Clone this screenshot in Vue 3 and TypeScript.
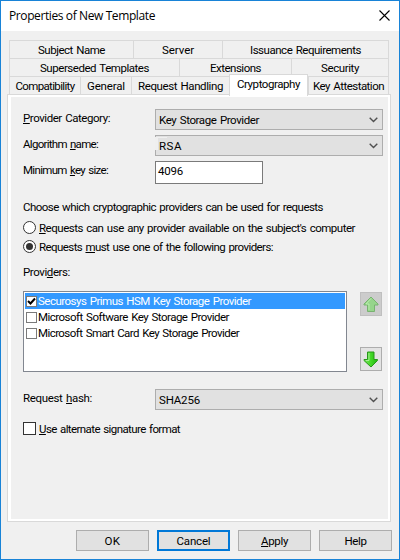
<script setup lang="ts">
import { ref, type Directive } from 'vue'

interface Tab { label: string; fit: number; size: number; active?: boolean }
interface Provider { label: string; fit: number }

// Spreads the letters of a label evenly so that it takes up the given width.
const vFit: Directive<HTMLElement, number> = {
  mounted(el, { value }) {
    const count = (el.textContent ?? '').length
    const natural = el.getBoundingClientRect().width
    el.style.letterSpacing = `${(value - natural) / count}px`
  },
}

const tabRows: Tab[][] = [
  [
    { label: 'Subject Name', fit: 67, size: 124 },
    { label: 'Server', fit: 32, size: 89 },
    { label: 'Issuance Requirements', fit: 111, size: 166 },
  ],
  [
    { label: 'Superseded Templates', fit: 109, size: 170 },
    { label: 'Extensions', fit: 51, size: 112 },
    { label: 'Security', fit: 38, size: 97 },
  ],
  [
    { label: 'Compatibility', fit: 59, size: 71 },
    { label: 'General', fit: 38, size: 51 },
    { label: 'Request Handling', fit: 85, size: 98 },
    { label: 'Cryptography', fit: 63, size: 79, active: true },
    { label: 'Key Attestation', fit: 71, size: 80 },
  ],
]

const providers: Provider[] = [
  { label: 'Securosys Primus HSM Key Storage Provider', fit: 213 },
  { label: 'Microsoft Software Key Storage Provider', fit: 191 },
  { label: 'Microsoft Smart Card Key Storage Provider', fit: 201 },
]

const checked = ref<number[]>([0])
const selected = ref(0)
const mode = ref<'any' | 'listed'>('listed')
const alternate = ref(false)

function toggle(i: number) {
  selected.value = i
  checked.value = checked.value.includes(i)
    ? checked.value.filter((n) => n !== i)
    : [...checked.value, i]
}
</script>

<template>
  <div class="dialog">
    <header class="titlebar">
      <span v-fit="146" class="title">Properties of New Template</span>
      <svg class="close" width="11" height="11" viewBox="0 0 11 11"><path d="M.5.5l10 10M10.500.5l-10 10" /></svg>
    </header>

    <nav class="tabs">
      <div v-for="(row, r) in tabRows" :key="r" class="tab-row">
        <div
          v-for="tab in row"
          :key="tab.label"
          class="tab"
          :class="{ active: tab.active }"
          :style="{ width: tab.size + 'px' }"
        ><span v-fit="tab.fit">{{ tab.label }}</span></div>
      </div>
    </nav>

    <main class="pane">
      <div class="field">
        <label><span v-fit="87"><u>P</u>rovider Category:</span></label>
        <div class="combo">
          <span v-fit="100">Key Storage Provider</span>
          <svg class="chevron" width="9" height="6" viewBox="0 0 9 6"><path d="M.7.8l3.800 3.800L8.300.8" /></svg>
        </div>
      </div>
      <div class="field">
        <label><span v-fit="75">Algorithm <u>n</u>ame:</span></label>
        <div class="combo worn">
          <span v-fit="23">RSA</span>
          <svg class="chevron" width="9" height="6" viewBox="0 0 9 6"><path d="M.7.8l3.800 3.800L8.300.8" /></svg>
        </div>
      </div>
      <div class="field">
        <label><span v-fit="85">Minimum <u>k</u>ey size:</span></label>
        <div class="edit"><span v-fit="25">4096</span></div>
      </div>

      <p class="intro"><span v-fit="300">Choose which cryptographic providers can be used for requests</span></p>
      <div class="option" @click="mode = 'any'">
        <i class="radio" :class="{ on: mode === 'any' }"></i>
        <span v-fit="316"><u>R</u>equests can use any provider available on the subject's computer</span>
      </div>
      <div class="option second" @click="mode = 'listed'">
        <i class="radio" :class="{ on: mode === 'listed' }"></i>
        <span v-fit="234">Requests <u>m</u>ust use one of the following providers:</span>
      </div>

      <p class="list-label"><span v-fit="47">Provi<u>d</u>ers:</span></p>
      <div class="list-area">
        <div class="list">
          <div
            v-for="(p, i) in providers"
            :key="p.label"
            class="item"
            :class="{ selected: selected === i }"
            @click="toggle(i)"
          >
            <i class="check">
              <svg v-if="checked.includes(i)" width="9" height="9" viewBox="0 0 9 9"><path d="M1 4l2.500 2.500L8 1.500" /></svg>
            </i>
            <span v-fit="p.fit">{{ p.label }}</span>
          </div>
        </div>
        <div class="movers">
          <div class="mover disabled">
            <svg width="16" height="17" viewBox="0 0 16 17">
              <path class="arrow faded" d="M8 1L15 8v1h-3.500v6.500h-7V9H1V8z" />
              <path class="shine" d="M8 2.500L3 8h3v6" />
            </svg>
          </div>
          <div class="mover">
            <svg width="16" height="17" viewBox="0 0 16 17">
              <defs>
                <linearGradient id="green" x1="0" y1="0" x2="1" y2="0">
                  <stop offset="0" stop-color="#7be35f" />
                  <stop offset=".5" stop-color="#43d926" />
                  <stop offset="1" stop-color="#22b512" />
                </linearGradient>
              </defs>
              <path class="arrow" d="M4.500 1h6.500v7.500h3.500v1L8 16 1 9.500v-1h3.500z" />
              <path class="shine" d="M6 2v7.500H3" />
            </svg>
          </div>
        </div>
      </div>

      <div class="field hash">
        <label><span v-fit="69">Request <u>h</u>ash:</span></label>
        <div class="combo">
          <span v-fit="41">SHA256</span>
          <svg class="chevron" width="9" height="6" viewBox="0 0 9 6"><path d="M.7.8l3.800 3.800L8.300.8" /></svg>
        </div>
      </div>
      <div class="option alt" @click="alternate = !alternate">
        <i class="box">
          <svg v-if="alternate" width="9" height="9" viewBox="0 0 9 9"><path d="M1 4l2.500 2.500L8 1.500" /></svg>
        </i>
        <span v-fit="141"><u>U</u>se alternate signature format</span>
      </div>
    </main>

    <footer class="buttons">
      <button><span v-fit="16">OK</span></button>
      <button class="default"><span v-fit="34">Cancel</span></button>
      <button><span v-fit="27"><u>A</u>pply</span></button>
      <button><span v-fit="22">Help</span></button>
    </footer>
  </div>
</template>

<style>
body { margin: 0; }
</style>

<style scoped>
.dialog, .dialog * { box-sizing: border-box; }
.dialog {
  width: 400px;
  height: 560px;
  border: 1px solid #1883d7;
  background: #f0f0f0;
  color: #000;
  font: 11.5px/16px Roboto, "Liberation Sans", sans-serif;
  word-spacing: 1px;
  display: flex;
  flex-direction: column;
  overflow: hidden;
  cursor: default;
}
span { white-space: pre; }
p { margin: 0; }
u { text-decoration: underline; text-decoration-thickness: 1px; text-underline-offset: 1px; text-decoration-skip-ink: none; }
.titlebar {
  height: 30px;
  flex: none;
  background: #fff;
  display: flex;
  align-items: center;
  justify-content: space-between;
  padding: 0 9px 0 8px;
}
.title { font: 12px/16px "Open Sans", "Noto Sans", sans-serif; word-spacing: 0; }
.close { margin-top: -2px; }
.close path { fill: none; stroke: #000; stroke-width: 1.100; }

.tabs { margin: 9px 0 0 8px; width: 380px; flex: none; }
.tab-row { display: flex; height: 18px; }
.tab {
  border: 1px solid #d9d9d9;
  border-width: 1px 0 0 1px;
  display: flex;
  justify-content: center;
  padding-top: 1px;
}
.tab:last-child { flex: 1; border-right-width: 1px; }
.tab.active {
  background: #fff;
  position: relative;
  height: 22px;
  margin-top: -2px;
  border-right-width: 1px;
}
.pane {
  margin-left: 6px;
  width: 384px;
  height: 428px;
  flex: none;
  border: 1px solid #d9d9d9;
  box-shadow: inset 0 0 0 2px #fff, inset 3px 0 0 #fff;
  padding: 14px 0 0 15px;
}
.field { display: grid; grid-template-columns: 132px 228px; height: 26px; }
label { padding-top: 1px; }
.combo {
  height: 21px;
  border: 1px solid #adadad;
  background: #e1e1e1;
  display: flex;
  justify-content: space-between;
  align-items: center;
  padding: 0 4px 0 3px;
}
.combo span { padding-top: 1px; }
.chevron path { fill: none; stroke: #505050; stroke-width: 1.400; }
.worn { position: relative; }
.worn::before {
  content: "";
  position: absolute;
  left: -1px;
  top: 1px;
  width: 12px;
  height: 13px;
  background: #efefef;
  clip-path: polygon(0 0, 100% 0, 100% 1px, 3px 1px, 3px 100%, 0 100%);
}
.edit { width: 108px; height: 23px; border: 1px solid #7a7a7a; background: #fff; padding: 1px 0 0 2px; }

.intro { margin-top: 12px; height: 19px; }
.option { display: flex; align-items: center; gap: 3px; height: 19px; }
.radio {
  width: 13px;
  height: 13px;
  border: 1px solid #333;
  border-radius: 50%;
  background: #fff;
  display: grid;
  place-items: center;
}
.radio.on::after { content: ""; width: 7px; height: 7px; border-radius: 50%; background: #333; }
.list-label { margin-top: 8px; height: 27px; }
.list-area { display: flex; gap: 13px; height: 81px; }
.list { width: 324px; border: 1px solid #828790; background: #fff; padding: 1px; }
.item { height: 16px; display: flex; align-items: center; padding-left: 1px; gap: 1px; }
.item.selected { background: #3399ff; color: #fff; }
.check {
  width: 11px;
  height: 11px;
  border: 1px solid #7a7a7a;
  background: #fff;
  display: grid;
  place-items: center;
}
.check path, .box path { fill: none; stroke: #000; stroke-width: 2; }
.movers { display: flex; flex-direction: column; justify-content: space-between; padding: 1px 0; }
.mover {
  width: 22px;
  height: 24px;
  border: 1px solid #adadad;
  background: #e3e3e3;
  display: grid;
  place-items: center;
}
.mover.disabled { background: #ccc; border-color: #bfbfbf; }
.arrow { fill: url(#green); stroke: #279719; stroke-width: 1; }
.arrow.faded { fill: #96d58b; stroke: #78b370; }
.shine { fill: none; stroke: #c5f5b7; stroke-width: 1; opacity: .7; }
.hash { margin-top: 17px; height: 30px; }
.box { width: 13px; height: 13px; border: 1px solid #333; background: #fff; display: grid; place-items: center; }

.buttons { display: flex; gap: 8px; margin: 8px 0 0 75px; flex: none; }
button {
  width: 73px;
  height: 21px;
  border: 1px solid #adadad;
  border-radius: 0;
  background: #e1e1e1;
  color: #000;
  font: inherit;
  padding: 0;
  display: flex;
  align-items: center;
  justify-content: center;
}
button.default { border: 2px solid #0078d7; }
</style>
